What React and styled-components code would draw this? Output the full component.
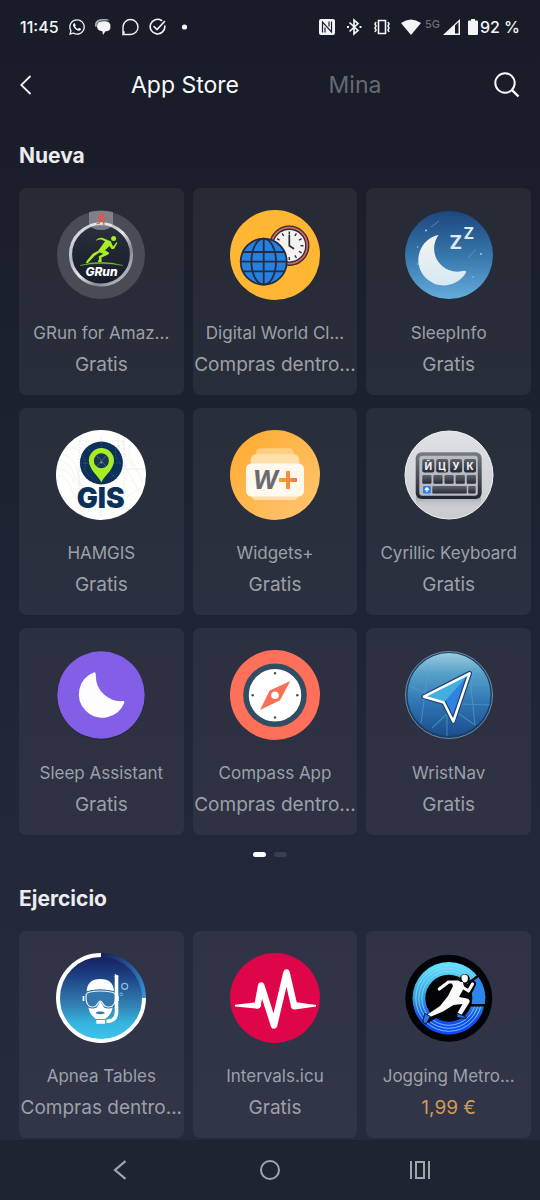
import React from "react";
import styled, { createGlobalStyle } from "styled-components";
import { FaWhatsapp } from "react-icons/fa";

const GlobalStyle = createGlobalStyle`
  *, *::before, *::after { box-sizing: border-box; }
  body {
    margin: 0;
    background: #272b3e;
    font-family: Inter, "Liberation Sans", sans-serif;
    -webkit-font-smoothing: antialiased;
  }
  button { font: inherit; color: inherit; background: none; border: 0; padding: 0; }
  svg { display: block; flex: none; }
`;

const Screen = styled.div`
  min-height: 100vh;
  display: flex;
  flex-direction: column;
  color: #e8e8ec;
  background: linear-gradient(#181c28 0%, #1a1e2a 14%, #1d2230 36%, #22273a 68%, #272b3e 100%);
`;

const StatusBar = styled.div`
  height: 54px;
  padding: 0 20px;
  display: flex;
  align-items: center;
  justify-content: space-between;
  font-size: 16px;
  font-weight: 500;
  color: #f4f4f6;
`;

const StatusGroup = styled.div`
  display: flex;
  align-items: center;
  gap: ${(p) => p.$gap}px;
`;

const Network = styled.span`
  align-self: flex-start;
  font-size: 11px;
  line-height: 10px;
  color: #6b6e78;
`;

const TopBar = styled.header`
  height: 62px;
  padding: 0 20px;
  display: grid;
  grid-template-columns: 1fr auto 1fr;
  align-items: center;
`;

const IconButton = styled.button`
  display: flex;
  justify-self: ${(p) => p.$side};
`;

const Tabs = styled.div`
  display: flex;
`;

const Tab = styled.button`
  width: 170px;
  font-size: 23px;
  line-height: 30px;
  color: ${(p) => (p.$active ? "#fafafc" : "#666973")};
`;

const Section = styled.section`
  padding: 0 9px 0 19px;
`;

const SectionTitle = styled.h2`
  margin: 0;
  padding: ${(p) => p.$top}px 0 17px;
  font-size: 21px;
  line-height: 30px;
  font-weight: 700;
  color: #ececee;
`;

const Grid = styled.div`
  display: grid;
  grid-template-columns: repeat(3, minmax(0, 1fr));
  gap: 13px 9px;
`;

const Card = styled.a`
  height: 207px;
  padding-top: 22px;
  display: flex;
  flex-direction: column;
  align-items: center;
  border-radius: 7px;
  background: rgba(255, 255, 255, 0.055);
  color: #9da0a8;
  text-decoration: none;
  white-space: nowrap;
`;

const AppName = styled.span`
  margin-top: 17px;
  font-size: 17px;
  line-height: 32px;
`;

const Price = styled.span`
  font-size: 19px;
  line-height: 32px;
  color: ${(p) => (p.$paid ? "#d09a56" : "inherit")};
`;

const Pager = styled.div`
  padding-top: 17px;
  display: flex;
  justify-content: center;
  gap: 8px;
`;

const PageMark = styled.span`
  width: 13px;
  height: 5px;
  border-radius: 3px;
  background: ${(p) => (p.$active ? "#ffffff" : "#3b3e4c")};
`;

const NavBar = styled.nav`
  height: 60px;
  margin-top: auto;
  padding: 0 45px;
  display: grid;
  grid-template-columns: repeat(3, 1fr);
  place-items: center;
  background: #1f2433;
  color: #a3a5ad;
`;

const AppIcon = ({ children }) => (
  <svg width="90" height="90" viewBox="0 0 90 90" aria-hidden="true">
    {children}
  </svg>
);

const GRunIcon = () => (
  <AppIcon>
    <defs>
      <linearGradient id="grunRing" x1="0" y1="0" x2="1" y2="1">
        <stop offset="0" stopColor="#f2f2f4" />
        <stop offset=".3" stopColor="#b5b7bd" />
        <stop offset=".5" stopColor="#e8e8ea" />
        <stop offset=".7" stopColor="#85888f" />
        <stop offset="1" stopColor="#d8d9dc" />
      </linearGradient>
      <linearGradient id="grunFace" x1="0" y1="0" x2="0" y2="1">
        <stop offset="0" stopColor="#2a303c" />
        <stop offset="1" stopColor="#161b2b" />
      </linearGradient>
    </defs>
    <circle cx="45" cy="45" r="44" fill="#484c57" />
    <circle cx="45" cy="44.5" r="30.5" fill="url(#grunFace)" stroke="url(#grunRing)" strokeWidth="3.2" />
    <path d="M33 2Q45 -1 57 2V14Q54 20 45 20Q36 20 33 14Z" fill="#8c8f97" fillOpacity=".8" />
    <path d="M34 15.500Q45 11.500 56 15.500" fill="none" stroke="#e4e4e6" strokeWidth="2.500" />
    <path d="M46 6L44.5 10L47.5 12L48 15M44.5 10L43.5 13L40.5 14M42 9L43 6.7L46 6.5L48 8.5L50 8" fill="none" stroke="#f0503a" strokeWidth="1.3" strokeLinejoin="round" />
    <circle cx="46.5" cy="4.2" r="1.4" fill="#f0503a" />
    <circle cx="57.6" cy="28.5" r="2.5" fill="#a6ee22" />
    <path d="M39.5 31Q42 27.400 46 27.700L54.700 31.200L57 36.600L60.800 32L61.400 33L58 39L55.500 39L53.500 36L49 40.200L52.400 42.200Q54 43.600 51.800 44.800L45.500 47.600L45.500 52H42.500Q41 50.800 43 50L42.800 46.200L47.400 43.800L43.500 42.500L38.400 46L32 53H29.800L31 50.500L37 43.400L42.200 40.800L49 31.200L45.500 29.600Q42.500 29.200 39.500 31Z" fill="#a6ee22" />
    <path d="M24 55.5Q45 49 67 55.5Q45 51.5 24 55.5Z" fill="#79bd35" stroke="#79bd35" strokeWidth=".4" />
    <text x="45.5" y="65.8" textAnchor="middle" fontSize="12" fontWeight="800" fontStyle="italic" fill="#fff">GRun</text>
  </AppIcon>
);

const WorldClockIcon = () => (
  <AppIcon>
    <circle cx="45" cy="45" r="45" fill="#ffb633" />
    <circle cx="59.3" cy="35.7" r="18" fill="#f5f1ee" stroke="#292d3d" strokeWidth="4.4" />
    <circle cx="59.3" cy="35.7" r="18" fill="none" stroke="#e0625c" strokeWidth="1.8" />
    {[0, 30, 60, 90, 120, 150, 180, 210, 240, 270, 300, 330].map((a) => (
      <path key={a} d="M59.3 21.5V24.5" stroke="#292d3d" strokeWidth="1.4" transform={`rotate(${a} 59.3 35.7)`} />
    ))}
    <path d="M59.3 25.5V35.7L63.5 38.5" fill="none" stroke="#292d3d" strokeWidth="1.7" strokeLinecap="round" />
    <g fill="none" stroke="#252c40" strokeWidth="1.8">
      <circle cx="33.7" cy="51.7" r="23" fill="#2580e0" />
      <ellipse cx="33.7" cy="51.7" rx="12.3" ry="23" />
      <path d="M33.7 28.7V74.7M10.7 51.7H56.7M13 42H54.4M13 61.4H54.4" />
    </g>
  </AppIcon>
);

const SleepInfoIcon = () => (
  <AppIcon>
    <defs>
      <linearGradient id="sleepSky" x1="0" y1="0" x2="0" y2="1">
        <stop offset="0" stopColor="#1d467e" />
        <stop offset=".5" stopColor="#3676aa" />
        <stop offset="1" stopColor="#65abdc" />
      </linearGradient>
      <linearGradient id="sleepMoon" x1="0" y1="0" x2="0" y2="1">
        <stop offset="0" stopColor="#f6f3f0" />
        <stop offset="1" stopColor="#d5e9f3" />
      </linearGradient>
    </defs>
    <circle cx="45" cy="45" r="44" fill="url(#sleepSky)" />
    <path d="M27 17L35 11M64 48L72 39" stroke="#6ca8d2" opacity=".6" />
    <g fill="#a8cfea">
      <circle cx="22" cy="20.5" r="1" />
      <circle cx="77" cy="44" r="1" />
      <circle cx="13.5" cy="37" r=".7" />
      <circle cx="69" cy="67" r=".7" />
      <circle cx="14" cy="54" r=".8" />
    </g>
    <path d="M34.6 25A25.5 25.5 0 1 0 62.3 62Q61.8 60.4 58.5 61A23 23 0 0 1 34.6 25Z" fill="url(#sleepMoon)" />
    <g fill="#dceaf3" fontWeight="700">
      <text x="45.5" y="39" fontSize="19">Z</text>
      <text x="59.5" y="29.3" fontSize="16">Z</text>
    </g>
  </AppIcon>
);

const HamGisIcon = () => (
  <AppIcon>
    <circle cx="45" cy="45" r="45" fill="#fefefd" />
    <g fill="none" stroke="#efece4" strokeWidth=".7">
      <path d="M3 30Q15 34 18 45T38 66M6 24Q20 28 22 45T42 68M10 18Q18 16 24 22M3 45Q12 48 16 60T30 80M68 10Q66 25 75 34T86 52M74 16Q70 28 80 36M62 5Q60 20 70 38T83 62M70 68Q78 62 84 58M4 39Q14 40 18 53" />
      <path d="M23 11H68V79H23ZM45 6V86M23 11L68 55M68 11L23 55M23 39H88" stroke="#e2e4e6" strokeDasharray="2 1" />
    </g>
    <circle cx="45.4" cy="33" r="21.5" fill="#0b315b" />
    <path d="M25 24Q31 31 29 36T37 49M60 18Q57 27 65 34M55 48Q60 43 65 44M24 33H67M45.4 12V54M30 17L61 49" fill="none" stroke="#6f8088" strokeWidth=".6" strokeDasharray="2 1" opacity=".6" />
    <path d="M45.4 52.3C42 46 32.8 39 32.8 30.6A12.6 12.6 0 0 1 58 30.6C58 39 48.5 46 45.4 52.3Z" fill="#a8eb27" />
    <circle cx="45.4" cy="30.7" r="7.5" fill="#16355a" />
    <path d="M41 26L50 36M41 36L50 26" stroke="#6f8470" strokeWidth=".6" />
    <circle cx="45.4" cy="32.500" r="1" fill="#9fae6e" />
    <text x="44.6" y="78.3" textAnchor="middle" fontSize="28" fontWeight="900" fill="#0b315b">GIS</text>
  </AppIcon>
);

const WidgetsIcon = () => (
  <AppIcon>
    <defs>
      <linearGradient id="widgetBg" x1="0" y1="0" x2="1" y2="1">
        <stop offset="0" stopColor="#ffa92c" />
        <stop offset="1" stopColor="#ffc673" />
      </linearGradient>
      <linearGradient id="plusBar" x1="0" y1="0" x2="1" y2="0">
        <stop offset="0" stopColor="#f9a52c" />
        <stop offset="1" stopColor="#f0784e" />
      </linearGradient>
    </defs>
    <circle cx="45" cy="45" r="45" fill="url(#widgetBg)" />
    <rect x="26" y="18.3" width="38" height="30" rx="5" fill="#ffce80" />
    <rect x="20.7" y="24" width="48.6" height="46" rx="6" fill="#ffdfa9" />
    <rect x="16" y="33.5" width="58" height="33" rx="5.5" fill="#fff8ec" />
    <text x="22.5" y="59.2" fontSize="25" fontWeight="700" fontStyle="italic" fill="#686b74">W</text>
    <path d="M56 41H60V48H67V52H60V59H56V52H49V48H56Z" fill="url(#plusBar)" />
  </AppIcon>
);

const CyrillicIcon = () => (
  <AppIcon>
    <defs>
      <linearGradient id="kbBg" x1="0" y1="0" x2="0" y2="1">
        <stop offset="0" stopColor="#dfe1e5" />
        <stop offset="1" stopColor="#c9cbcf" />
      </linearGradient>
      <linearGradient id="kbFrame" x1="0" y1="0" x2="0" y2="1">
        <stop offset="0" stopColor="#777b83" />
        <stop offset="1" stopColor="#1f2431" />
      </linearGradient>
      <linearGradient id="kbKey" x1="0" y1="0" x2="0" y2="1">
        <stop offset="0" stopColor="#5e626c" />
        <stop offset="1" stopColor="#252a36" />
      </linearGradient>
      <linearGradient id="kbShadow" x1="0" y1="0" x2="0" y2="1">
        <stop offset="0" stopColor="#7b7e87" />
        <stop offset="1" stopColor="#c9cbcf" stopOpacity="0" />
      </linearGradient>
    </defs>
    <circle cx="45" cy="45" r="44" fill="url(#kbBg)" stroke="#f0f1f3" />
    <rect x="12" y="62" width="65" height="17" rx="6" fill="url(#kbShadow)" />
    <rect x="11.7" y="22.3" width="66" height="46.7" rx="6" fill="url(#kbFrame)" />
    <rect x="15.3" y="25.7" width="58.5" height="40" rx="3" fill="#b8babf" />
    {["Й", "Ц", "У", "К"].map((c, i) => (
      <g key={c}>
        <rect x={18.3 + i * 13.9} y="29" width="12" height="13.5" rx="2" fill="url(#kbKey)" />
        <text x={24.3 + i * 13.9} y="39.7" textAnchor="middle" fontSize="10" fontWeight="700" fill="#f4f4f6">{c}</text>
      </g>
    ))}
    {[0, 1, 2, 3, 4].map((i) => (
      <rect key={i} x={18.3 + i * 11.1} y="45" width="9.2" height="8.7" rx="1.2" fill="url(#kbKey)" />
    ))}
    <rect x="19" y="56" width="7.8" height="7.5" rx="1" fill="#2384e4" />
    <path d="M22.9 62V58M21 60L22.9 57.7L24.8 60" fill="none" stroke="#fff" strokeWidth="1.2" />
    <rect x="28.3" y="56" width="34.5" height="7.5" rx="1" fill="url(#kbKey)" />
    <rect x="64.2" y="56" width="7.4" height="7.5" rx="1" fill="url(#kbKey)" />
  </AppIcon>
);

const SleepAssistantIcon = () => (
  <AppIcon>
    <circle cx="45" cy="46" r="44" fill="#252938" />
    <circle cx="45" cy="45" r="43.7" fill="#825fe6" />
    <path d="M38.2 23.800A22 22 0 1 0 66.800 52.400Q58 54 48 46.500T38.200 23.800Z" fill="#fdfdff" stroke="#fdfdff" strokeWidth="3" strokeLinejoin="round" />
  </AppIcon>
);

const CompassIcon = () => (
  <AppIcon>
    <circle cx="45" cy="45" r="45" fill="#ff705b" />
    <circle cx="45" cy="45.3" r="29" fill="#fff" stroke="#314d62" strokeWidth="5.5" />
    <path d="M60.3 31L50 50.3L30 60L39.7 40.5Z" fill="#fa7056" />
    <circle cx="45" cy="45.3" r="3.8" fill="#fff" />
    <g fill="#3d4b5b">
      <circle cx="45" cy="23.3" r="1.2" />
      <circle cx="45" cy="67.5" r="1.2" />
      <circle cx="22.7" cy="45.3" r="1.2" />
      <circle cx="67.3" cy="45.3" r="1.2" />
    </g>
  </AppIcon>
);

const WristNavIcon = () => (
  <AppIcon>
    <defs>
      <linearGradient id="navBg" x1="0" y1="0" x2="0" y2="1">
        <stop offset="0" stopColor="#9bccdd" />
        <stop offset=".25" stopColor="#569fc9" />
        <stop offset=".6" stopColor="#2f76b3" />
        <stop offset="1" stopColor="#1c4d8c" />
      </linearGradient>
    </defs>
    <circle cx="45" cy="45" r="43.5" fill="#193f6b" stroke="#738ca4" strokeWidth="1" />
    <circle cx="45" cy="44.5" r="41.5" fill="url(#navBg)" />
    <g fill="none" stroke="#5ba3d0" strokeWidth="1.2" opacity=".55">
      <path d="M25 15L22 36L17 73M6 36L22 43M28 78L48 59L71 75M57 54L86 55M62 35H85M70 17L67 38L71 75M43 65V86" />
    </g>
    <path d="M65.6 23.3L49.3 71.5L39.8 52.5L19.8 46.7Z" fill="#2f83df" stroke="#1b4478" strokeWidth="5" strokeLinejoin="round" />
    <path d="M65.6 23.3L39.8 52.5L19.8 46.7Z" fill="#43aede" />
    <path d="M65.6 23.3L49.3 71.5L39.8 52.5L19.8 46.7Z" fill="none" stroke="#fff" strokeWidth="2.5" strokeLinejoin="round" />
  </AppIcon>
);

const maskShape =
  "M30 43Q30 39.5 34 39Q44.3 37 55 39Q59.5 39.5 59.5 43Q60 53.5 53 54Q48.5 54.3 46.5 50Q44.3 46 42 50Q40 54.3 36 54Q29.5 53.5 30 43Z";

const ApneaIcon = () => (
  <AppIcon>
    <defs>
      <linearGradient id="sea" x1="0" y1="0" x2="0" y2="1">
        <stop offset="0" stopColor="#18205d" />
        <stop offset=".2" stopColor="#1b3a7d" />
        <stop offset=".6" stopColor="#3383b5" />
        <stop offset=".8" stopColor="#35b5de" />
        <stop offset="1" stopColor="#3dc4ec" />
      </linearGradient>
      <linearGradient id="seaArc" x1="0" y1="0" x2="1" y2="1">
        <stop offset="0" stopColor="#18205d" />
        <stop offset="1" stopColor="#3596df" />
      </linearGradient>
    </defs>
    <circle cx="45" cy="45" r="42" fill="url(#sea)" />
    <path d="M45 2A43 43 0 0 1 88 45" fill="none" stroke="url(#seaArc)" strokeWidth="4" />
    <path d="M45 2A43 43 0 1 0 88 45" fill="none" stroke="#fff" strokeWidth="4" />
    <path d="M30.7 38.5Q31 26 44.3 26T58 38.5Q44 34.5 30.7 38.5Z" fill="#fff" />
    <path d="M32 50H57Q57 61 49 66H40Q32 61 32 50ZM40.4 67H49V70.8H40.4Z" fill="#fff" />
    <path d={maskShape} fill="#3b85b6" stroke="#2b699f" strokeWidth="3" />
    <path d={maskShape} fill="#3278ad" stroke="#e9f5fb" strokeWidth="1.2" />
    <path d="M44.3 48L48 54.8H40.8Z" fill="#fff" />
    <path d="M40 60Q42 58.3 44.3 59Q46.5 58.3 48.5 60Q44.3 61.8 40 60Z" fill="#2c739f" stroke="#2c739f" strokeWidth=".6" />
    <path d="M27.5 43V48M61.8 43V48" stroke="#fff" strokeWidth="1.8" />
    <path d="M60.5 23V59Q60.5 68.3 50.4 68.3" fill="none" stroke="#fff" strokeWidth="3.6" />
    <path d="M58.7 21L62.3 22.5V24H58.7Z" fill="#fff" />
    <circle cx="68.7" cy="33.3" r="3" fill="none" stroke="#8cc0de" strokeWidth="1.2" />
    <circle cx="65.2" cy="41.3" r="1.4" fill="none" stroke="#8cc0de" strokeWidth=".8" />
  </AppIcon>
);

const IntervalsIcon = () => (
  <AppIcon>
    <circle cx="45" cy="45" r="45" fill="#df0549" />
    <path d="M27.500 52.500L31.200 32.500L44 72.500L56.500 19.500L64 52" fill="none" stroke="#fff" strokeWidth="6.5" strokeLinecap="round" strokeLinejoin="round" />
    <path d="M5 51.8L24.5 49.5L31.5 52Q30 55.8 26 55.5L5 53.6ZM61 52L66.5 49.3L86 52V53.5L65 56.5Q61.800 57 60.800 53.500Z" fill="#fff" />
  </AppIcon>
);

const JoggingIcon = () => (
  <AppIcon>
    <defs>
      <linearGradient id="track" x1="0" y1="0" x2="0" y2="1">
        <stop offset="0" stopColor="#64e7ff" />
        <stop offset=".5" stopColor="#319edc" />
        <stop offset=".78" stopColor="#164ee8" />
        <stop offset="1" stopColor="#0b4bff" />
      </linearGradient>
    </defs>
    <circle cx="44.8" cy="45.3" r="43.5" fill="#030407" />
    <circle cx="44.8" cy="45.3" r="36.3" fill="url(#track)" />
    <g fill="none" stroke="#8fd8f8" strokeWidth=".8">
      <circle cx="44.8" cy="45.3" r="33" />
      <circle cx="44.8" cy="45.3" r="30" />
      <circle cx="44.8" cy="45.3" r="27" />
    </g>
    <path d="M44.8 45.3L73 22.5A36.3 36.3 0 0 1 80.7 52.3H60Z" fill="#2b87ee" />
    <circle cx="44.8" cy="45.3" r="23.5" fill="#030407" />
    <path d="M64 52.3H82M66 29L76 21.5" stroke="#030407" strokeWidth="2.4" />
    <path d="M36 36L44.5 29H54L59 35L64.5 38L68 31M55 32L49 46L62.5 49L56 60.5M48 47L38 56L24 65.5" fill="none" stroke="#030407" strokeWidth="8" strokeLinecap="round" strokeLinejoin="round" />
    <circle cx="60.8" cy="26" r="5" fill="#030407" />
    <path d="M35.3 36L44.5 29H54L59 34.5L64.5 38L68.5 31" fill="none" stroke="#fafafa" strokeWidth="3.2" strokeLinecap="round" strokeLinejoin="round" />
    <path d="M47 28L59 29L60 35L55 44L63 45.5Q67 47 65 50L57.5 62L53.5 60L58.5 51L49.5 52L39 58.5L26 64L23.5 61.5L36 53L44 43L49 33Z" fill="#fafafa" />
    <path d="M57.5 23Q60 20.5 63.2 22.5Q65 26 62.5 29Q59 30.5 57.5 26Z" fill="#fafafa" />
    <path d="M21 60.5L26.500 63.500L22 71Q19 71 19 67ZM53 60L62 64V65.500L53 64.500Z" fill="#2b78df" stroke="#030407" strokeWidth=".8" />
  </AppIcon>
);

const newest = [
  { name: "GRun for Amaz...", price: "Gratis", Icon: GRunIcon },
  { name: "Digital World Cl...", price: "Compras dentro...", Icon: WorldClockIcon },
  { name: "SleepInfo", price: "Gratis", Icon: SleepInfoIcon },
  { name: "HAMGIS", price: "Gratis", Icon: HamGisIcon },
  { name: "Widgets+", price: "Gratis", Icon: WidgetsIcon },
  { name: "Cyrillic Keyboard", price: "Gratis", Icon: CyrillicIcon },
  { name: "Sleep Assistant", price: "Gratis", Icon: SleepAssistantIcon },
  { name: "Compass App", price: "Compras dentro...", Icon: CompassIcon },
  { name: "WristNav", price: "Gratis", Icon: WristNavIcon },
];

const exercise = [
  { name: "Apnea Tables", price: "Compras dentro...", Icon: ApneaIcon },
  { name: "Intervals.icu", price: "Gratis", Icon: IntervalsIcon },
  { name: "Jogging Metro...", price: "1,99 €", paid: true, Icon: JoggingIcon },
];

const AppGrid = ({ apps }) => (
  <Grid>
    {apps.map(({ name, price, paid, Icon }) => (
      <Card key={name} href="#app">
        <Icon />
        <AppName>{name}</AppName>
        <Price $paid={paid}>{price}</Price>
      </Card>
    ))}
  </Grid>
);

const Status = () => (
  <StatusBar>
    <StatusGroup $gap={9}>
      <span>11:45</span>
      <FaWhatsapp size={18} />
      <svg width="18" height="18" viewBox="0 0 18 18" fill="currentColor">
        <path d="M0 8.500Q-1 1 8 1H11Q13.500 1 14.500 2.500H8Q1.500 2.500 1.500 9Z" fill="#a9abb2" />
        <path d="M7.500 3.300H10.500Q15.500 3.500 15.500 8.400Q15.500 13.300 10.500 13.300L8 17L7.300 13.300Q2 13 2 8.300Q2 3.500 7.500 3.300Z" />
      </svg>
      <svg width="18" height="18" viewBox="0 0 18 18" fill="none" stroke="currentColor" strokeWidth="1.4">
        <path d="M1 16.500V9A7.500 7.500 0 1 1 8.500 16.500H1L2.500 13.500" />
      </svg>
      <svg width="18" height="18" viewBox="0 0 18 18" fill="none" stroke="currentColor" strokeWidth="1.6" strokeLinecap="round">
        <path d="M12.500 2.500A7.300 7.300 0 1 0 15.800 8M5 8.500L8 11.500L15.500 3.500" />
      </svg>
      <svg width="18" height="18" viewBox="0 0 18 18" fill="currentColor">
        <circle cx="8.5" cy="9" r="2.6" />
      </svg>
    </StatusGroup>
    <StatusGroup $gap={4}>
      <StatusGroup $gap={10}>
        <svg width="16" height="16" viewBox="0 0 16 16">
          <rect width="16" height="16" rx="2" fill="#f4f4f6" />
          <path d="M3.500 13.500V3L12.500 13V2.500" fill="none" stroke="#191d29" strokeWidth="1.2" />
          <path d="M6 13.500V8.500M10 2.500V7.500" fill="none" stroke="#191d29" strokeWidth="1.200" />
        </svg>
        <svg width="18" height="18" viewBox="0 0 18 18" fill="none" stroke="currentColor" strokeWidth="1.7">
          <path d="M4.500 4.500L13 12.500L9 16V2L13 5.500L4.500 13.500" />
          <path d="M2 9H4M14.500 9H16.500" strokeWidth="2.2" />
        </svg>
        <svg width="18" height="16" viewBox="0 0 18 16" fill="none" stroke="currentColor" strokeWidth="1.6">
          <path d="M5.500 1.500H12.500V14.500H5.500ZM3 3L2 5L3 7L2 9L3 11L2 13M15 3L16 5L15 7L16 9L15 11L16 13" />
        </svg>
        <svg width="20" height="16" viewBox="0 0 20 16" fill="currentColor">
          <path d="M0 4Q10 -3 20 4L10 16Z" />
        </svg>
      </StatusGroup>
      <StatusGroup $gap={3}>
        <Network>5G</Network>
        <svg width="17" height="16" viewBox="0 0 17 16">
          <path fillRule="evenodd" d="M0 16L17 0V16ZM12 6.5V14.5H15.5V3Z" fill="#f4f4f6" />
        </svg>
      </StatusGroup>
      <StatusGroup $gap={2}>
        <svg width="14" height="16" viewBox="0 0 14 16" fill="currentColor">
          <path d="M7 0H11V1.500H13Q14 1.500 14 2.500V15Q14 16 13 16H5Q4 16 4 15V2.500Q4 1.500 5 1.500H7Z" />
        </svg>
        <span>92 %</span>
      </StatusGroup>
    </StatusGroup>
  </StatusBar>
);

export default function App() {
  return (
    <Screen>
      <GlobalStyle />
      <Status />
      <TopBar>
        <IconButton $side="start" aria-label="Atrás">
          <svg width="12" height="20" viewBox="0 0 12 20" fill="none" stroke="#f2f2f5" strokeWidth="1.8">
            <path d="M10.500 1L1.200 10L10.500 19" />
          </svg>
        </IconButton>
        <Tabs role="tablist">
          <Tab role="tab" aria-selected="true" $active>App Store</Tab>
          <Tab role="tab" aria-selected="false">Mina</Tab>
        </Tabs>
        <IconButton $side="end" aria-label="Buscar">
          <svg width="26" height="26" viewBox="0 0 26 26" fill="none" stroke="#fafafc" strokeWidth="2">
            <circle cx="11" cy="11" r="9.7" />
            <path d="M17.800 17.800L24.500 24.500" strokeWidth="2.4" />
          </svg>
        </IconButton>
      </TopBar>
      <main>
        <Section>
          <SectionTitle $top={25}>Nueva</SectionTitle>
          <AppGrid apps={newest} />
        </Section>
        <Pager>
          <PageMark $active />
          <PageMark />
        </Pager>
        <Section>
          <SectionTitle $top={27}>Ejercicio</SectionTitle>
          <AppGrid apps={exercise} />
        </Section>
      </main>
      <NavBar>
        <IconButton aria-label="Volver">
          <svg width="14" height="20" viewBox="0 0 14 20" fill="none" stroke="currentColor" strokeWidth="2.2">
            <path d="M12.500 1.200L2 10L12.500 18.800" />
          </svg>
        </IconButton>
        <IconButton aria-label="Inicio">
          <svg width="20" height="20" viewBox="0 0 20 20" fill="none" stroke="currentColor" strokeWidth="2">
            <circle cx="10" cy="10" r="9" />
          </svg>
        </IconButton>
        <IconButton aria-label="Recientes">
          <svg width="20" height="18" viewBox="0 0 20 18" fill="none" stroke="currentColor" strokeWidth="2">
            <path d="M1 0V18M19 0V18M6 1H14V17H6Z" />
          </svg>
        </IconButton>
      </NavBar>
    </Screen>
  );
}
